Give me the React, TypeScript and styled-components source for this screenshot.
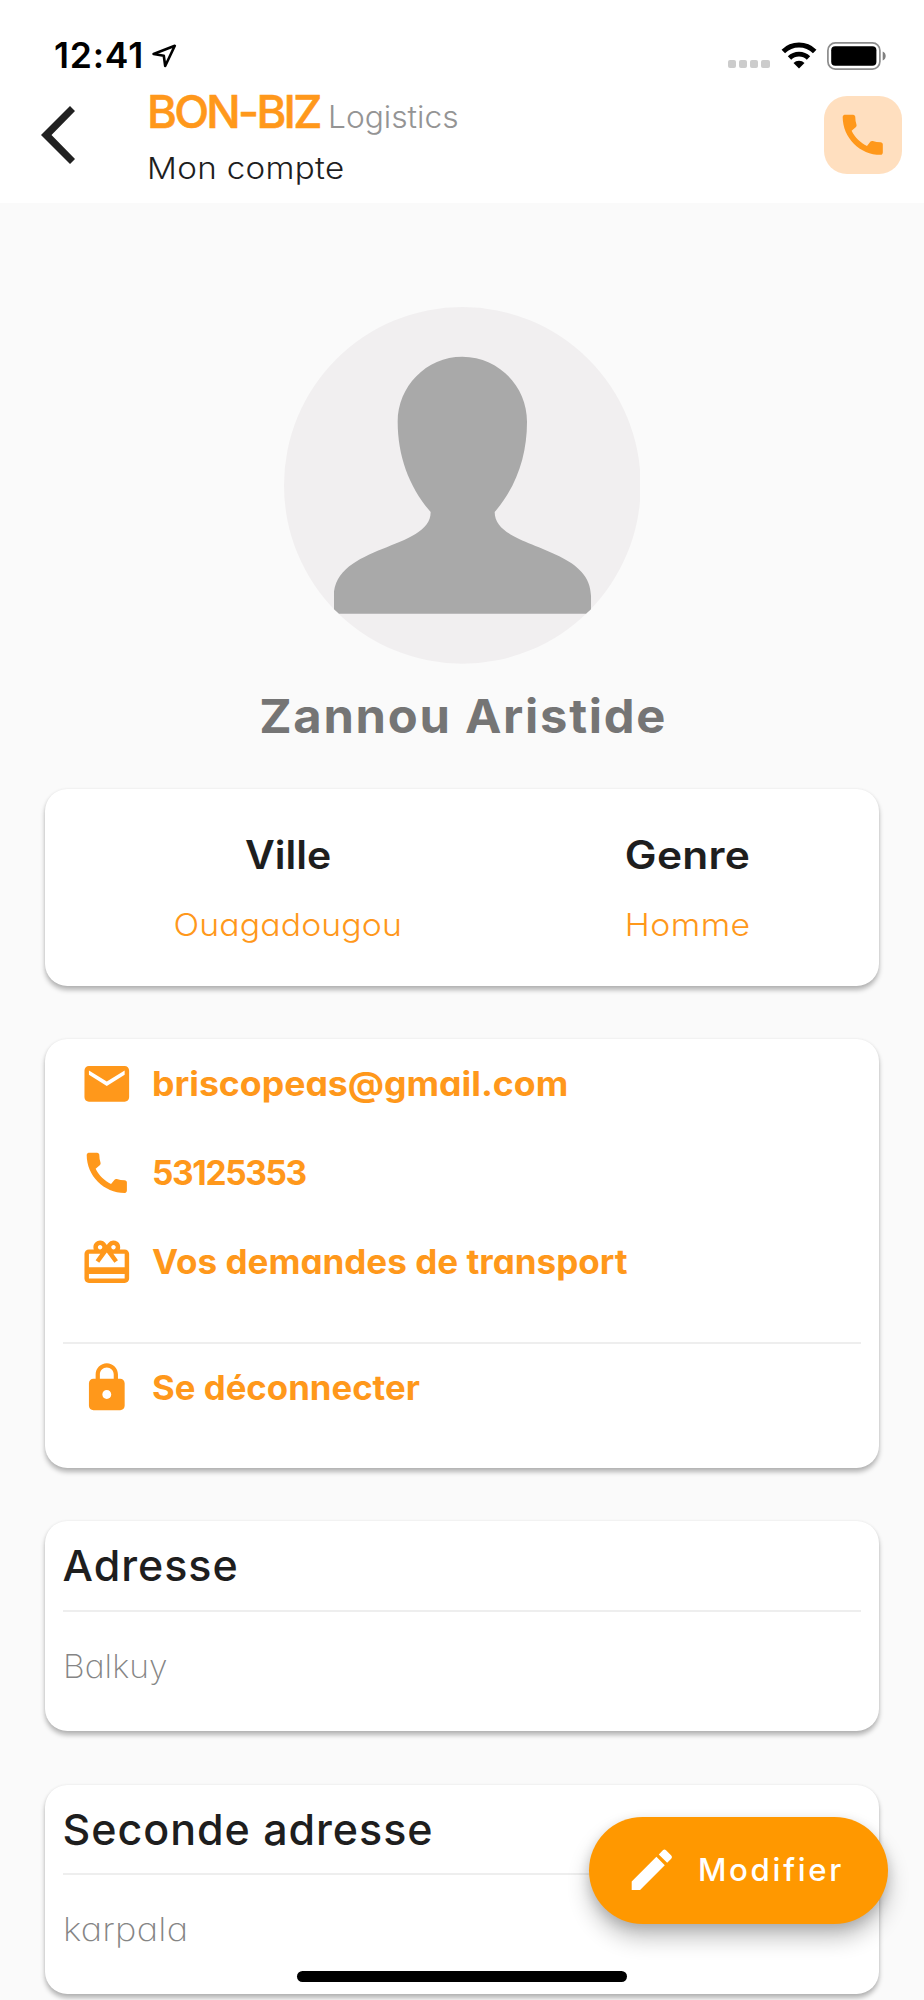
import React from "react";
import styled, { createGlobalStyle } from "styled-components";
import { MdCall, MdEdit, MdLock, MdMail, MdRedeem } from "react-icons/md";

const ORANGE = "#ff981b";

const GlobalStyle = createGlobalStyle`
  *, *::before, *::after { box-sizing: border-box; }
  html, body { margin: 0; background: #fafafa; }
  body { font-family: Inter, "Liberation Sans", sans-serif; color: #1e1e1e; }
`;

const Screen = styled.div`
  position: relative;
  display: flex;
  flex-direction: column;
  width: 924px;
  height: 2000px;
  overflow: hidden;
  background: #fafafa;
`;

/* Wide geometric lettering: single-storey "a" and slightly expanded glyphs. */
const Geometric = styled.span<{ $spacing?: number; $stretch?: number }>`
  display: block;
  width: fit-content;
  font-feature-settings: "cv11";
  letter-spacing: ${(p) => p.$spacing ?? 0}px;
  white-space: nowrap;
  transform: scaleX(${(p) => p.$stretch ?? 1});
  transform-origin: left center;
`;

const StatusBar = styled.div`
  display: flex;
  flex: none;
  align-items: center;
  height: 88px;
  padding: 23px 37px 0 54px;
  background: #fff;
`;

const Clock = styled.span`
  font-size: 35.5px;
  font-weight: 600;
  line-height: 40px;
  letter-spacing: 0.8px;
  color: #000;
`;

const LocationArrow = styled.svg`
  width: 26px;
  height: 26px;
  margin-left: 8px;
`;

const StatusIcons = styled.div`
  display: flex;
  align-items: center;
  margin-left: auto;
`;

const SignalDots = styled.div`
  display: flex;
  gap: 3px;
  margin: 17px 11px 0 0;
`;

const SignalDot = styled.i`
  width: 8.2px;
  height: 8.4px;
  border-radius: 2px;
  background: #ccc;
`;

const Wifi = styled.svg`
  width: 36px;
  height: 27px;
  margin-right: 10.5px;
`;

const Battery = styled.svg`
  width: 60px;
  height: 28px;
`;

const Header = styled.header`
  display: flex;
  flex: none;
  height: 115px;
  background: #fff;
`;

const BackButton = styled.button`
  display: flex;
  align-items: flex-start;
  width: 147px;
  padding: 18px 0 0 39.5px;
  border: 0;
  background: none;

  svg { flex: none; width: 36px; height: 59px; }
`;

const HeaderText = styled.div`
  flex: 1;
`;

const Brand = styled.div`
  display: flex;
  align-items: baseline;
  height: 47px;
`;

const BrandName = styled(Geometric)`
  font-size: 45.5px;
  font-weight: 500;
  line-height: 47px;
  color: ${ORANGE};
  -webkit-text-stroke: 0.6px ${ORANGE};
`;

const BrandSuffix = styled(Geometric)`
  margin-left: 8.5px;
  font-size: 30.5px;
  font-weight: 300;
  line-height: 31px;
  color: #949494;
`;

const PageTitle = styled(Geometric)`
  font-size: 30px;
  font-weight: 300;
  line-height: 66px;
`;

const CallButton = styled.button`
  display: flex;
  align-items: center;
  justify-content: center;
  width: 78px;
  height: 78px;
  margin: 8px 22.5px 0 0;
  padding: 0;
  border: 0;
  border-radius: 23px;
  background: #ffdfbf;
  color: ${ORANGE};
  font-size: 53.5px;
`;

const Content = styled.main`
  display: flex;
  flex-direction: column;
  align-items: center;
  padding-top: 104px;
`;

const Avatar = styled.svg`
  flex: none;
  width: 356.7px;
  height: 356.7px;
`;

const UserName = styled.h1`
  margin: 22.3px 0 43.2px;
  padding-left: 2px;
  font-size: 47px;
  font-weight: 700;
  line-height: 60px;
  letter-spacing: 1.65px;
  color: #757575;
  transform: scaleX(1.04);
`;

const Card = styled.section<{ $height: number }>`
  flex: none;
  width: 834.4px;
  height: ${(p) => p.$height}px;
  margin-bottom: 53.6px;
  padding: 0 17.8px;
  border-radius: 22.3px;
  background: #fff;
  box-shadow: 0 4px 5px rgba(0, 0, 0, 0.28), 0 0 3px rgba(0, 0, 0, 0.07);
`;

const FactsCard = styled(Card)`
  display: grid;
  grid-template-columns: 400px 400px;
  padding: 41px 0 0 42.8px;
`;

const Fact = styled.div`
  display: flex;
  flex-direction: column;
  align-items: center;
  gap: 20px;
`;

const FactLabel = styled(Geometric)`
  font-size: 39px;
  font-weight: 600;
  line-height: 50px;
  transform-origin: center;
`;

const FactValue = styled(Geometric)`
  font-size: 31px;
  font-weight: 300;
  line-height: 50px;
  color: ${ORANGE};
  transform-origin: center;
`;

const ActionRow = styled.div`
  display: flex;
  align-items: center;
  gap: 18px;
  height: 89.3px;
  padding-left: 17.8px;
  color: ${ORANGE};

  svg { flex: none; width: 53.6px; height: 53.6px; }
`;

const ActionText = styled(Geometric)`
  font-size: 33.5px;
  font-weight: 660;
  line-height: 50px;
`;

const Divider = styled.hr<{ $top?: number }>`
  height: 2px;
  margin: ${(p) => p.$top ?? 0}px 0 0;
  border: 0;
  background: #eee;
`;

const AddressTitle = styled.h2`
  margin: 0;
  font-size: 43px;
  font-weight: 450;
  line-height: 88.5px;
  letter-spacing: 0.95px;
`;

const AddressValue = styled(Geometric)`
  font-size: 33px;
  font-weight: 230;
  line-height: 108px;
  color: #858585;
`;

const EditButton = styled.button`
  position: absolute;
  right: 35.7px;
  bottom: 76px;
  display: flex;
  align-items: center;
  width: 299px;
  height: 107px;
  padding: 0 0 1px 36px;
  border: 0;
  border-radius: 54px;
  background: #ff9800;
  color: #fff;
  font: 500 31.2px Inter, sans-serif;
  letter-spacing: 2.7px;
  box-shadow: 0 14px 22px rgba(0, 0, 0, 0.24), 0 4px 12px rgba(0, 0, 0, 0.14);

  svg { width: 53.6px; height: 53.6px; margin-right: 19px; }
`;

const HomeIndicator = styled.div`
  position: absolute;
  left: 297px;
  bottom: 18px;
  width: 330px;
  height: 11.4px;
  border-radius: 6px;
  background: #000;
`;

const actions = [
  { icon: MdMail, label: "briscopeas@gmail.com", spacing: 0, stretch: 1.064 },
  { icon: MdCall, label: "53125353", spacing: -1.35, stretch: 1 },
  { icon: MdRedeem, label: "Vos demandes de transport", spacing: 0, stretch: 1.046 },
];

const addresses = [
  { title: "Adresse", value: "Balkuy", spacing: 0, stretch: 1.02 },
  { title: "Seconde adresse", value: "karpala", spacing: 0.2, stretch: 1.095 },
];

export default function App() {
  return (
    <Screen>
      <GlobalStyle />
      <StatusBar>
        <Clock>12:41</Clock>
        <LocationArrow viewBox="0 0 26 26" fill="none" stroke="#000" strokeWidth="2.6" strokeLinejoin="round">
          <path d="M22.800 2.800 1.600 11 11.800 12.800 13.200 23Z" />
        </LocationArrow>
        <StatusIcons>
          <SignalDots>
            <SignalDot />
            <SignalDot />
            <SignalDot />
            <SignalDot />
          </SignalDots>
          <Wifi viewBox="0 0 36 27" fill="none" stroke="#000">
            <path d="M2.300 9.500A22.500 22.500 0 0 1 33.700 9.500" strokeWidth="5" />
            <path d="M8.500 16A13.500 13.500 0 0 1 27.500 16" strokeWidth="4.800" />
            <path d="M12.500 21A7.800 7.800 0 0 1 23.500 21L18 26.500Z" fill="#000" stroke="none" />
          </Wifi>
          <Battery viewBox="0 0 60 28">
            <rect x="0.900" y="0.900" width="52" height="26.200" rx="7.500" fill="none" stroke="#8c8c8c" strokeWidth="1.700" />
            <rect x="4.200" y="4.200" width="45.200" height="19.600" rx="4" fill="#000" />
            <path d="M55.700 9.600c4 1.600 4 7.400 0 9Z" fill="#808080" />
          </Battery>
        </StatusIcons>
      </StatusBar>

      <Header>
        <BackButton aria-label="Retour">
          <svg viewBox="0 0 36 59" fill="#212121">
            <path d="M1 29 30 0 35 5 11.500 29 35 53 30 58Z" />
          </svg>
        </BackButton>
        <HeaderText>
          <Brand>
            <BrandName $spacing={-2.7}>BON-BIZ</BrandName>
            <BrandSuffix $stretch={1.04}>Logistics</BrandSuffix>
          </Brand>
          <PageTitle $spacing={0.3} $stretch={1.105}>Mon compte</PageTitle>
        </HeaderText>
        <CallButton aria-label="Appeler">
          <MdCall />
        </CallButton>
      </Header>

      <Content>
        <Avatar viewBox="131 51 1070 1070">
          <circle cx="666" cy="586" r="535" fill="#f1eff0" />
          <path
            fill="#a9a9a9"
            d="M666 200C775 200 860 290 860 395C860 500 826 593 763 666C763 780 1052 764 1052 918V958L1037 971H296L281 958V918C281 764 571 780 571 666C508 593 472 500 472 395C472 290 557 200 666 200Z"
          />
        </Avatar>
        <UserName>Zannou Aristide</UserName>

        <FactsCard $height={196.4}>
          <Fact>
            <FactLabel $stretch={1.05}>Ville</FactLabel>
            <FactValue $spacing={0.1} $stretch={1.09}>Ouagadougou</FactValue>
          </Fact>
          <Fact>
            <FactLabel $spacing={0.2} $stretch={1.09}>Genre</FactLabel>
            <FactValue $spacing={0.4} $stretch={1.09}>Homme</FactValue>
          </Fact>
        </FactsCard>

        <Card $height={428.7}>
          {actions.map(({ icon: Icon, label, spacing, stretch }) => (
            <ActionRow key={label}>
              <Icon />
              <ActionText $spacing={spacing} $stretch={stretch}>{label}</ActionText>
            </ActionRow>
          ))}
          <Divider $top={34.6} />
          <ActionRow>
            <MdLock />
            <ActionText $stretch={1.038}>Se déconnecter</ActionText>
          </ActionRow>
        </Card>

        {addresses.map(({ title, value, spacing, stretch }) => (
          <Card key={title} $height={209.7}>
            <AddressTitle>{title}</AddressTitle>
            <Divider />
            <AddressValue $spacing={spacing} $stretch={stretch}>{value}</AddressValue>
          </Card>
        ))}
      </Content>

      <EditButton>
        <MdEdit />
        Modifier
      </EditButton>
      <HomeIndicator />
    </Screen>
  );
}
